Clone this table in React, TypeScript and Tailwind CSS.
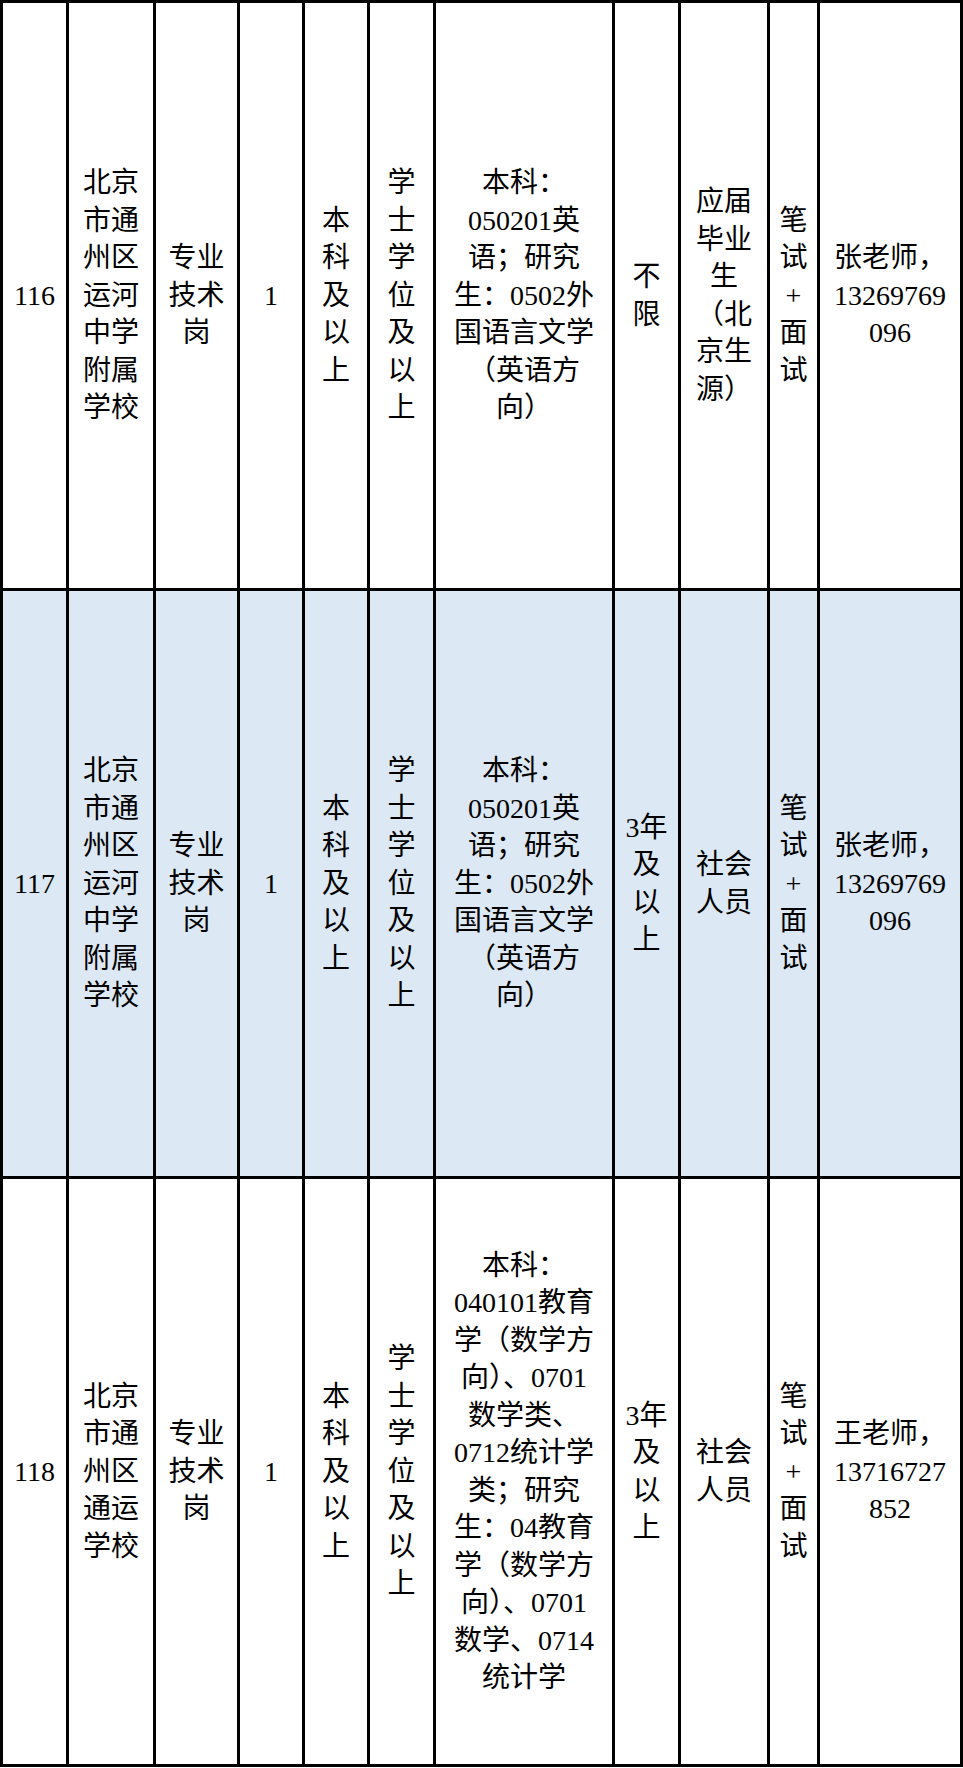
type Row = {
  shaded: boolean;
  cells: string[][];
};

// 每个单元格按原表的换行拆成多行
const rows: Row[] = [
  {
    shaded: false,
    cells: [
      ["116"],
      ["北京", "市通", "州区", "运河", "中学", "附属", "学校"],
      ["专业", "技术", "岗"],
      ["1"],
      ["本", "科", "及", "以", "上"],
      ["学", "士", "学", "位", "及", "以", "上"],
      ["本科：", "050201英", "语；研究", "生：0502外", "国语言文学", "（英语方", "向）"],
      ["不", "限"],
      ["应届", "毕业", "生", "（北", "京生", "源）"],
      ["笔", "试", "+", "面", "试"],
      ["张老师，", "13269769", "096"],
    ],
  },
  {
    shaded: true,
    cells: [
      ["117"],
      ["北京", "市通", "州区", "运河", "中学", "附属", "学校"],
      ["专业", "技术", "岗"],
      ["1"],
      ["本", "科", "及", "以", "上"],
      ["学", "士", "学", "位", "及", "以", "上"],
      ["本科：", "050201英", "语；研究", "生：0502外", "国语言文学", "（英语方", "向）"],
      ["3年", "及", "以", "上"],
      ["社会", "人员"],
      ["笔", "试", "+", "面", "试"],
      ["张老师，", "13269769", "096"],
    ],
  },
  {
    shaded: false,
    cells: [
      ["118"],
      ["北京", "市通", "州区", "通运", "学校"],
      ["专业", "技术", "岗"],
      ["1"],
      ["本", "科", "及", "以", "上"],
      ["学", "士", "学", "位", "及", "以", "上"],
      [
        "本科：",
        "040101教育",
        "学（数学方",
        "向）、0701",
        "数学类、",
        "0712统计学",
        "类；研究",
        "生：04教育",
        "学（数学方",
        "向）、0701",
        "数学、0714",
        "统计学",
      ],
      ["3年", "及", "以", "上"],
      ["社会", "人员"],
      ["笔", "试", "+", "面", "试"],
      ["王老师，", "13716727", "852"],
    ],
  },
];

function Cell({ lines, shaded }: { lines: string[]; shaded: boolean }) {
  return (
    <div
      className={`flex flex-col items-center justify-center text-center ${
        shaded ? "bg-[#dce8f4]" : "bg-white"
      }`}
    >
      {lines.map((line, i) => (
        <div key={i} className="whitespace-nowrap">
          {line}
        </div>
      ))}
    </div>
  );
}

export default function App() {
  return (
    <div className="w-[963px] h-[1768px] bg-white">
      <div
        className="grid w-[963px] grid-cols-[63px_84px_81px_62px_62px_63px_176px_63px_86px_47px_140px] grid-rows-[585px_585px_585px] gap-[3px] border-[3px] border-black bg-black text-[28px] leading-[37.5px] text-black"
        style={{ fontFamily: '"Liberation Serif", "Noto Sans CJK SC", serif' }}
      >
        {rows.map((row, r) =>
          row.cells.map((lines, c) => (
            <Cell key={`${r}-${c}`} lines={lines} shaded={row.shaded} />
          ))
        )}
      </div>
    </div>
  );
}
